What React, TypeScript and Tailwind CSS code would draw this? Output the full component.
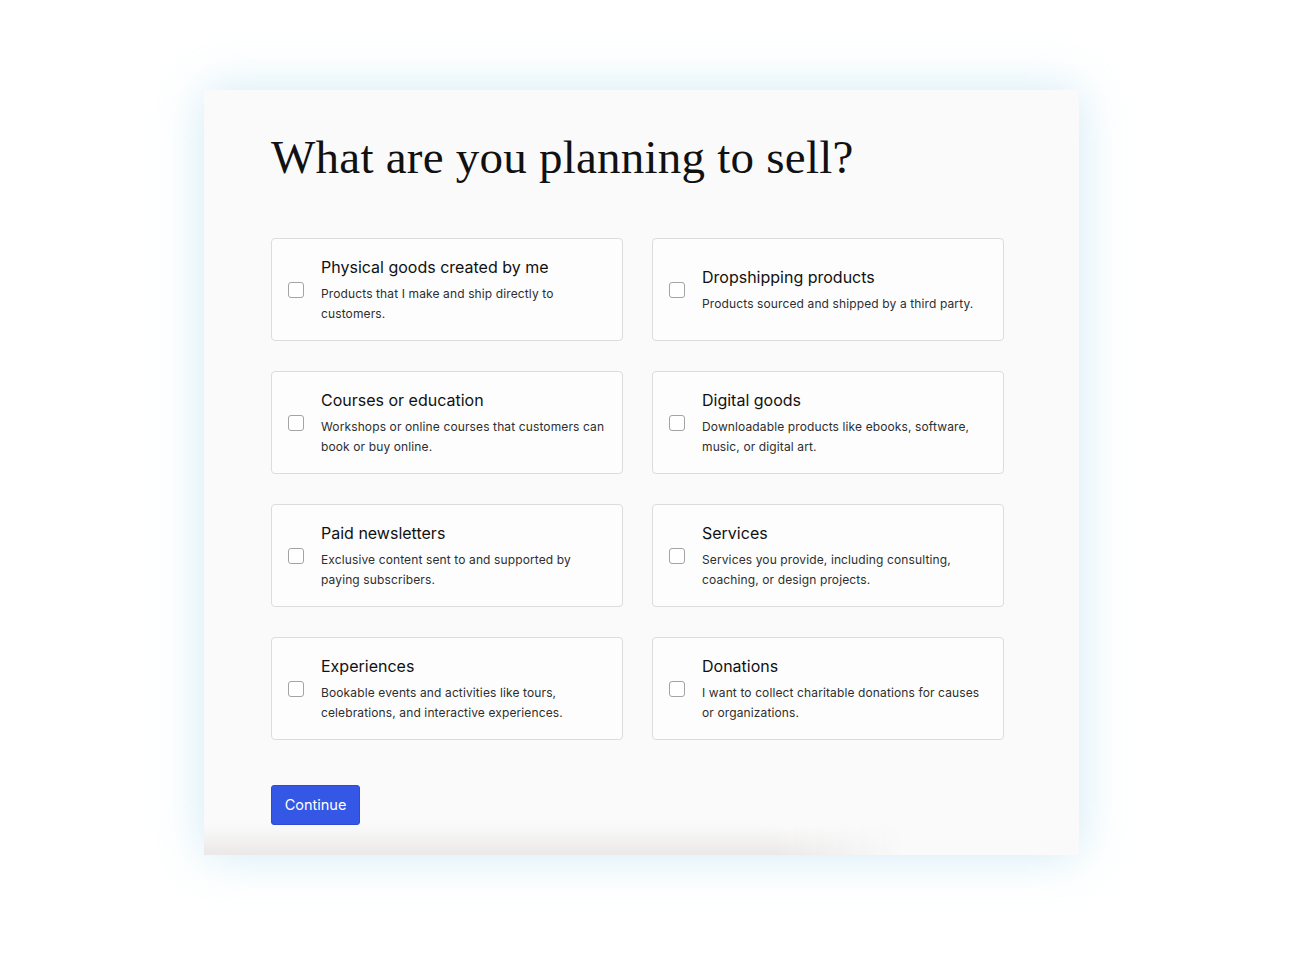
import React from "react";

const options = [
  { title: "Physical goods created by me", desc: "Products that I make and ship directly to customers." },
  { title: "Dropshipping products", desc: "Products sourced and shipped by a third party." },
  { title: "Courses or education", desc: "Workshops or online courses that customers can book or buy online." },
  { title: "Digital goods", desc: "Downloadable products like ebooks, software, music, or digital art." },
  { title: "Paid newsletters", desc: "Exclusive content sent to and supported by paying subscribers." },
  { title: "Services", desc: "Services you provide, including consulting, coaching, or design projects." },
  { title: "Experiences", desc: "Bookable events and activities like tours, celebrations, and interactive experiences." },
  { title: "Donations", desc: "I want to collect charitable donations for causes or organizations." },
];

function OptionCard({ title, desc }: { title: string; desc: string }) {
  return (
    <label className="flex h-[103px] cursor-pointer items-center rounded-[4px] border border-[#dcdcdc] bg-[#fdfdfd] pl-[16px] pr-[14px]">
      <span className="h-[16px] w-[16px] shrink-0 rounded-[3px] border border-[#a3a3a3] bg-white" />
      <div className="ml-[17px]">
        <div className="text-[16px] leading-[22px] text-[#111]">{title}</div>
        <p className="mt-[6px] text-[12px] leading-[20px] tracking-[0.01em] text-[#2e2e2e]">{desc}</p>
      </div>
    </label>
  );
}

export default function App() {
  return (
    <div className="min-h-[955px] bg-white pt-[90px] font-['Inter','Liberation_Sans',sans-serif]">
      <div className="ml-[204px] w-[875px] overflow-hidden bg-[#fafafa] shadow-[0_0_45px_rgba(150,210,235,0.45)]">
        <div className="px-[67px] pt-[44px]">
          <h1 className="font-['Liberation_Serif',serif] text-[47px] leading-none tracking-[0.005em] text-[#111]">
            What are you planning to sell?
          </h1>
          <div className="mt-[57px] grid w-[733px] grid-cols-2 gap-x-[29px] gap-y-[30px]">
            {options.map((o) => (
              <OptionCard key={o.title} {...o} />
            ))}
          </div>
          <button className="mt-[45px] h-[40px] w-[89px] rounded-[3px] border border-[#2d4bd8] bg-[#3557e6] text-[14.5px] text-white">
            Continue
          </button>
        </div>
        <div className="[mask-image:linear-gradient(to_right,black_65%,transparent_80%)]">
          <div className="h-[30px] bg-[linear-gradient(to_bottom,#fafafa,#ebe8e7)]" />
        </div>
      </div>
    </div>
  );
}
